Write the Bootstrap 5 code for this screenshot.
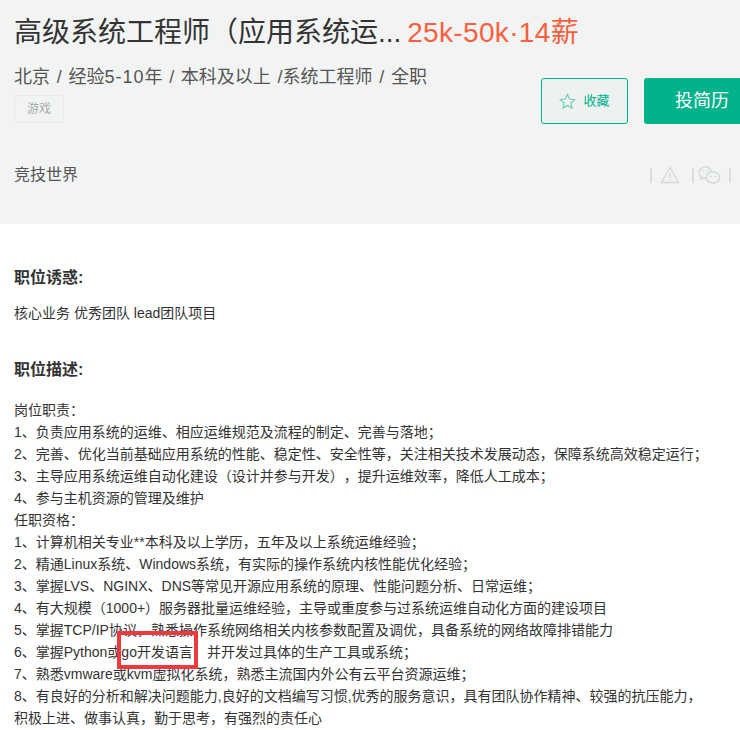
<!DOCTYPE html>
<html lang="zh-CN">
<head>
<meta charset="utf-8">
<title>高级系统工程师</title>
<link href="https://cdn.jsdelivr.net/npm/bootstrap@5.3.0/dist/css/bootstrap.min.css" rel="stylesheet">
<style>
html,body{height:730px;overflow:hidden;background:#fff}
body{font-family:"Liberation Sans","Noto Sans CJK SC",sans-serif;color:#333;position:relative;text-spacing-trim:space-all;font-feature-settings:"chws" 0,"halt" 0}
.hdr{height:224px;background:#f2f4f4;padding-left:14px;overflow:hidden}
.ttl-row{height:66px;white-space:nowrap;font-size:28px;line-height:32px;padding-top:17px;color:#333}
.sal{color:#ff5f3d;margin-left:-2px;letter-spacing:.35px}
.meta{font-size:18px;line-height:24px;color:#555;margin-top:-1px;white-space:nowrap;word-spacing:1.7px}
.wide{letter-spacing:1px}
.tagx{display:inline-block;border:1px solid #e8e8e8;border-radius:3px;font-size:12px;line-height:26px;height:28px;padding:0 12px;color:#aaa;margin-top:6px}
.sidex{width:199px;flex:none;padding-top:12px}
.btn-fav{width:87px;height:46px;flex:none;border:1px solid #00b38a;border-radius:3px;background:#edf1f0;color:#00b38a;font-size:13px;gap:7px}
.btn-send{width:125px;height:46px;flex:none;background:#00b38a;border-radius:3px 0 0 3px;color:#fff;font-size:18px;padding-left:31px;margin-left:16px}
.comprow{margin-top:41px;height:20px}
.comp{font-size:16px;line-height:20px;color:#555}
.minibar{width:2px;height:15px;background:#ddd;flex:none}
.toolsx{width:90px;flex:none}
.sect{font-size:16px;font-weight:700;line-height:22px;color:#333;margin:0}
.sect-a{margin-top:43px}
.sect-b{margin-top:35px}
.lead-txt{margin-top:13px}
.body-txt{margin-top:18px}
.txt{font-size:14px;line-height:22px;color:#333;white-space:nowrap}
.wrapx{padding:0 14px}
.markbox{position:absolute;left:117px;top:631px;width:81px;height:38px;border:4px solid #ee3a3f}
</style>
</head>
<body>
<div class="hdr d-flex flex-column">
  <div class="ttl-row">高级系统工程师（应用系统运... <span class="sal">25k-50k·14薪</span></div>
  <div class="d-flex">
    <div class="flex-grow-1">
      <div class="meta">北京 / 经验<span class="wide">5-10</span>年 / 本科及以上 /系统工程师 / 全职</div>
      <span class="tagx">游戏</span>
    </div>
    <div class="d-flex sidex">
      <div class="btn-fav d-flex align-items-center justify-content-center">
        <svg width="17" height="17" viewBox="0 0 24 24" fill="none" stroke="#6fcdb6" stroke-width="1.6"><path d="M12 2l3 6.600 7.200.8-5.400 4.800 1.500 7.100L12 17.600l-6.300 3.700 1.500-7.100L1.800 9.400l7.200-.8z"/></svg>
        <span>收藏</span>
      </div>
      <div class="btn-send d-flex align-items-center">投简历</div>
    </div>
  </div>
  <div class="d-flex align-items-center comprow">
    <div class="comp flex-grow-1">竞技世界</div>
    <div class="d-flex align-items-center toolsx">
      <span class="minibar"></span>
      <svg class="mx-2" width="20" height="18" viewBox="0 0 20 18" fill="none" stroke="#d6d8d8" stroke-width="1.4"><path d="M10 1.500L1.500 16.500h17z"/><path d="M10 6.500v5.500M10 13.300v1.200"/></svg>
      <span class="minibar ms-1"></span>
      <svg class="ms-1 me-2" width="23" height="18" viewBox="0 0 23 18" fill="none" stroke="#d6d8d8" stroke-width="1.4"><path d="M13.500 6.200C13 3.200 10.500 1 7.500 1 4 1 1 3.500 1 6.700c0 1.900 1 3.400 2.600 4.500l-.6 2 2.300-1.200c.8.200 1.500.3 2.300.3"/><ellipse cx="15" cy="11.500" rx="6.800" ry="5.500"/><path d="M5 4.800h.8M9.500 4.800h.8M12.500 10.300h.8M17 10.300h.8" stroke-linecap="round"/></svg>
      <span class="minibar"></span>
    </div>
  </div>
</div>
<div class="wrapx">
  <h2 class="sect sect-a">职位诱惑:</h2>
  <p class="txt lead-txt mb-0">核心业务 优秀团队 lead团队项目</p>
  <h2 class="sect sect-b">职位描述:</h2>
  <div class="txt body-txt">岗位职责：<br>
1、负责应用系统的运维、相应运维规范及流程的制定、完善与落地；<br>
2、完善、优化当前基础应用系统的性能、稳定性、安全性等，关注相关技术发展动态，保障系统高效稳定运行；<br>
3、主导应用系统运维自动化建设（设计并参与开发），提升运维效率，降低人工成本；<br>
4、参与主机资源的管理及维护<br>
任职资格：<br>
1、计算机相关专业**本科及以上学历，五年及以上系统运维经验；<br>
2、精通Linux系统、Windows系统，有实际的操作系统内核性能优化经验；<br>
3、掌握LVS、NGINX、DNS等常见开源应用系统的原理、性能问题分析、日常运维；<br>
4、有大规模（1000+）服务器批量运维经验，主导或重度参与过系统运维自动化方面的建设项目<br>
5、掌握TCP/IP协议，熟悉操作系统网络相关内核参数配置及调优，具备系统的网络故障排错能力<br>
6、掌握Python或go开发语言，并开发过具体的生产工具或系统；<br>
7、熟悉vmware或kvm虚拟化系统，熟悉主流国内外公有云平台资源运维；<br>
8、有良好的分析和解决问题能力,良好的文档编写习惯,优秀的服务意识，具有团队协作精神、较强的抗压能力，<br>
积极上进、做事认真，勤于思考，有强烈的责任心</div>
</div>
<div class="markbox"></div>
</body>
</html>
